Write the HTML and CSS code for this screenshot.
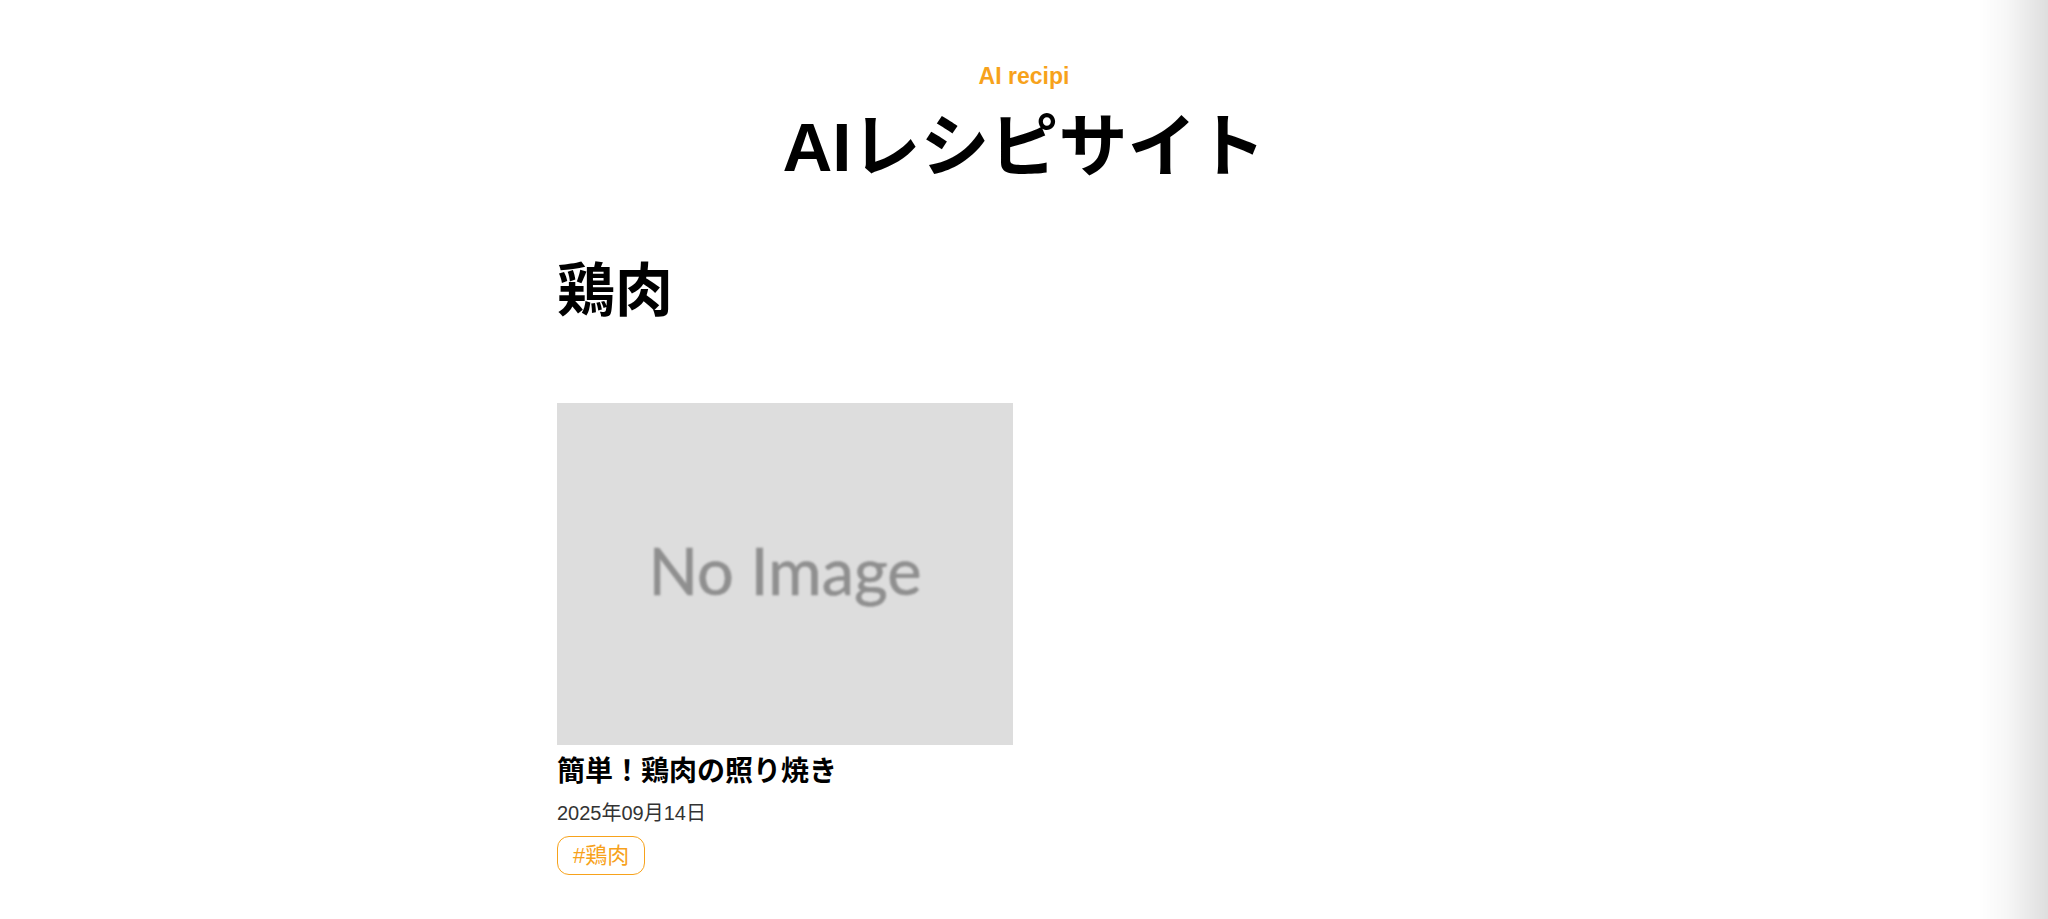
FILE: index.html
```html
<!DOCTYPE html>
<html lang="ja">
<head>
<meta charset="utf-8">
<title>AIレシピサイト</title>
<link rel="stylesheet" href="styles.css">
</head>
<body>
<header class="site-header">
  <p class="brand">AI recipi</p>
  <h1 class="site-title">AIレシピサイト</h1>
</header>
<main class="container">
  <h2 class="category-title">鶏肉</h2>
  <ul class="recipe-list">
    <li class="recipe-card">
      <div class="thumb"><span class="thumb-text">No Image</span></div>
      <h3 class="recipe-title">簡単！鶏肉の照り焼き</h3>
      <p class="recipe-date">2025年09月14日</p>
      <div class="tags"><span class="tag">#鶏肉</span></div>
    </li>
  </ul>
</main>
<div class="edge-shadow"></div>
</body>
</html>
```
FILE: styles.css
```css
html, body {
  margin: 0;
  padding: 0;
  background: #ffffff;
}
body {
  font-family: "Liberation Sans", "Noto Sans CJK JP", sans-serif;
  color: #000000;
}
.site-header {
  text-align: center;
  padding-top: 63px;
}
.brand {
  margin: 0;
  font-size: 23px;
  line-height: 26px;
  font-weight: 700;
  color: #f7a21b;
}
.site-title {
  margin: 17px 0 0;
  font-size: 69px;
  line-height: 83px;
  font-weight: 700;
}
.container {
  width: 934px;
  margin: 0 auto;
}
.category-title {
  margin: 67px 0 0;
  font-size: 58px;
  line-height: 70px;
  font-weight: 700;
}
.recipe-list {
  list-style: none;
  margin: 77px 0 0;
  padding: 0;
  display: flex;
  gap: 24px;
}
.recipe-card {
  width: 456px;
}
.thumb {
  width: 456px;
  height: 342px;
  background: #dddddd;
  display: flex;
  align-items: center;
  justify-content: center;
}
.thumb-text {
  font-family: Lato, "Liberation Sans", sans-serif;
  font-size: 65px;
  line-height: 1;
  color: #8f8f8f;
  filter: blur(1px);
  margin-top: -8px;
  -webkit-text-stroke: 0.6px #8f8f8f;
}
.recipe-title {
  margin: 7px 0 0;
  font-size: 28px;
  line-height: 39px;
  font-weight: 700;
}
.recipe-date {
  margin: 8px 0 0;
  font-size: 20px;
  line-height: 28px;
  color: #333333;
}
.tags {
  margin-top: 9px;
  display: flex;
}
.tag {
  display: inline-block;
  font-size: 22px;
  line-height: 34px;
  padding: 1.5px 15px;
  border: 1.5px solid #f7a21b;
  border-radius: 12px;
  color: #f7a21b;
}
.edge-shadow {
  position: fixed;
  top: 0;
  right: 0;
  width: 70px;
  height: 100%;
  background: linear-gradient(to right, rgba(0,0,0,0) 0%, rgba(0,0,0,0.03) 40%, rgba(0,0,0,0.13) 100%);
  pointer-events: none;
}
```
